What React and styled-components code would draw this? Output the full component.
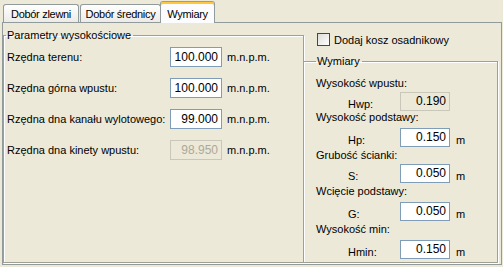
import React from 'react';
import styled, { createGlobalStyle } from 'styled-components';

const GlobalStyle = createGlobalStyle`
  html, body {
    margin: 0;
    padding: 0;
    background: #ece9d8;
  }
  body {
    font-family: "Liberation Sans", Arial, sans-serif;
    font-size: 11px;
    color: #000;
  }
`;

const Window = styled.div`
  width: 503px;
  height: 267px;
  box-sizing: border-box;
  padding: 1px 1px 2px 2px;
  display: flex;
  flex-direction: column;
`;

const TabStrip = styled.div`
  display: flex;
  align-items: flex-end;
  height: 21px;
  position: relative;
  z-index: 1;
`;

const Tab = styled.div`
  box-sizing: border-box;
  width: ${p => p.w}px;
  height: ${p => (p.active ? '22px' : '18px')};
  margin-bottom: ${p => (p.active ? '-1px' : '0')};
  margin-left: ${p => (p.active ? '-1px' : '1px')};
  padding-top: ${p => (p.active ? '2px' : '0')};
  display: flex;
  align-items: center;
  justify-content: center;
  border: 1px solid #919b9c;
  border-bottom: none;
  border-radius: 3px 3px 0 0;
  background: ${p => (p.active ? '#fcfcfe' : 'linear-gradient(#ffffff, #ecebe6)')};
  box-shadow: ${p => (p.active ? 'inset 0 2px 0 #ffc83c' : 'none')};
  border-top-color: ${p => (p.active ? '#e68b2c' : '#919b9c')};
  letter-spacing: -0.3px;
  white-space: nowrap;
`;

const Panel = styled.div`
  flex: 1;
  display: flex;
  border: 1px solid #919b9c;
  background: #ece9d8;
`;

const Group = styled.fieldset`
  box-sizing: border-box;
  margin: 0;
  min-width: 0;
  padding: 0;
  border: 1px solid #a19f92;
  box-shadow: 1px 1px 0 #ffffff, inset 1px 1px 0 #ffffff;
`;

const Legend = styled.legend`
  margin-left: ${p => p.offset}px;
  padding: 0 2px 0 1px;
  line-height: 13px;
`;

const LeftGroup = styled(Group)`
  width: 301px;
  margin: 6px 0 1px 0;
`;

const ParamGrid = styled.div`
  display: grid;
  grid-template-columns: 163px 52px auto;
  grid-auto-rows: 20px;
  row-gap: 11px;
  align-items: center;
  padding: 5px 0 0 3px;
`;

const Input = styled.div`
  box-sizing: border-box;
  width: ${p => p.w}px;
  height: ${p => p.h}px;
  padding-right: 3px;
  display: flex;
  align-items: center;
  justify-content: flex-end;
  border: 1px solid ${p => (p.disabled ? '#c9c7ba' : '#7f9db9')};
  background: ${p => (p.disabled ? '#ece9d8' : '#ffffff')};
  color: ${p => (p.dim ? '#aca899' : '#000')};
  font-size: 12px;
`;

const Unit = styled.span`
  margin-left: ${p => p.gap}px;
`;

const RightColumn = styled.div`
  flex: 1;
  display: flex;
  flex-direction: column;
`;

const CheckRow = styled.label`
  display: flex;
  align-items: center;
  gap: 4px;
  height: 13px;
  margin: 10px 0 0 13px;
`;

const CheckBox = styled.span`
  box-sizing: border-box;
  width: 13px;
  height: 13px;
  border: 1px solid #1c5180;
  background: linear-gradient(135deg, #dcdcd7, #ffffff);
`;

const RightGroup = styled(Group)`
  flex: 1;
  margin: 9px 3px 1px 0;
  border-left: none;
  padding-left: 12px;
`;

const Title = styled.div`
  line-height: 13px;
  margin-top: ${p => p.gap}px;
`;

const DimRow = styled.div`
  display: flex;
  align-items: flex-end;
  margin-top: ${p => p.gap}px;
  line-height: 13px;
`;

const Symbol = styled.span`
  width: 52px;
  padding-left: 32px;
`;

const params = [
  { label: 'Rzędna terenu:', value: '100.000' },
  { label: 'Rzędna górna wpustu:', value: '100.000' },
  { label: 'Rzędna dna kanału wylotowego:', value: '99.000' },
  { label: 'Rzędna dna kinety wpustu:', value: '98.950', disabled: true },
];

const dims = [
  { title: 'Wysokość wpustu:', sym: 'Hwp:', value: '0.190', disabled: true, before: 9, after: 2 },
  { title: 'Wysokość podstawy:', sym: 'Hp:', value: '0.150', unit: 'm', before: 0, after: 4 },
  { title: 'Grubość ścianki:', sym: 'S:', value: '0.050', unit: 'm', before: 2, after: 2 },
  { title: 'Wcięcie podstawy:', sym: 'G:', value: '0.050', unit: 'm', before: 2, after: 4 },
  { title: 'Wysokość min:', sym: 'Hmin:', value: '0.150', unit: 'm', before: 2, after: 4 },
];

export default function App() {
  return (
    <>
      <GlobalStyle />
      <Window>
        <TabStrip>
          <Tab w={76}>Dobór zlewni</Tab>
          <Tab w={81}>Dobór średnicy</Tab>
          <Tab w={55} active>Wymiary</Tab>
        </TabStrip>
        <Panel>
          <LeftGroup>
            <Legend offset={2}>Parametry wysokościowe</Legend>
            <ParamGrid>
              {params.map(p => (
                <React.Fragment key={p.label}>
                  <span>{p.label}</span>
                  <Input w={52} h={20} disabled={p.disabled} dim={p.disabled}>
                    {p.value}
                  </Input>
                  <Unit gap={5}>m.n.p.m.</Unit>
                </React.Fragment>
              ))}
            </ParamGrid>
          </LeftGroup>
          <RightColumn>
            <CheckRow>
              <CheckBox />
              Dodaj kosz osadnikowy
            </CheckRow>
            <RightGroup>
              <Legend offset={0}>Wymiary</Legend>
              {dims.map(d => (
                <React.Fragment key={d.sym}>
                  <Title gap={d.before}>{d.title}</Title>
                  <DimRow gap={d.after}>
                    <Symbol>{d.sym}</Symbol>
                    <Input w={50} h={19} disabled={d.disabled}>
                      {d.value}
                    </Input>
                    {d.unit && <Unit gap={6}>{d.unit}</Unit>}
                  </DimRow>
                </React.Fragment>
              ))}
            </RightGroup>
          </RightColumn>
        </Panel>
      </Window>
    </>
  );
}
